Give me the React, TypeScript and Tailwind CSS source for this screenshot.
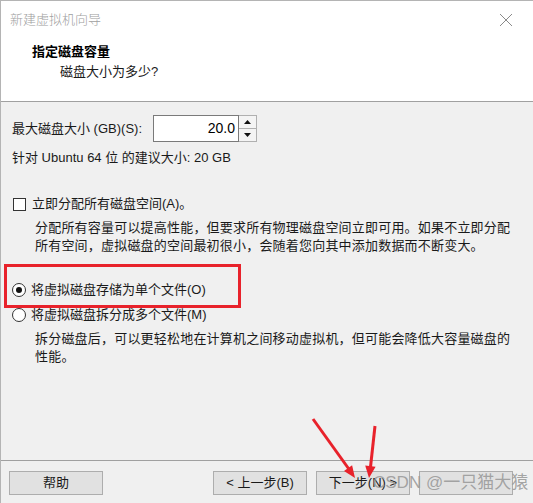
import React from 'react';

const font = { fontFamily: '"Liberation Sans", "Noto Sans CJK SC", sans-serif' };

const Button: React.FC<{ label: string; className?: string }> = ({ label, className }) => (
  <div
    className={`w-[94px] h-[24px] flex items-center justify-center bg-[#e1e1e1] border border-[#adadad] text-[13px] text-[#1a1a1a] ${className ?? ''}`}
  >
    {label}
  </div>
);

const App: React.FC = () => {
  return (
    <div className="relative w-[533px] h-[503px] overflow-hidden bg-[#f0f0f0]" style={font}>
      <div className="h-full flex flex-col border-l border-t border-[#b4b4b4]">
        {/* Title bar */}
        <div className="h-[37px] bg-white flex items-center justify-between pl-[9px] pr-[20px]">
          <span className="text-[13px] text-[#a0a0a0] font-light">新建虚拟机向导</span>
          <svg width="14" height="14" viewBox="0 0 14 14">
            <path d="M1 1 L13 13 M13 1 L1 13" stroke="#8a8a8a" strokeWidth="1" />
          </svg>
        </div>

        {/* Header */}
        <div className="h-[64px] bg-white border-b border-[#a0a0a0] pt-[5px]">
          <div className="pl-[31px] text-[13px] leading-[18px] font-bold text-black">指定磁盘容量</div>
          <div className="pl-[59px] mt-[2px] text-[13px] leading-[18px] text-[#1a1a1a]">磁盘大小为多少?</div>
        </div>

        {/* Body */}
        <div className="flex-1 pl-[11px] pt-[13px] text-[13px] text-[#1a1a1a]">
          <div className="flex items-center h-[27px]">
            <span className="w-[141px]">最大磁盘大小 (GB)(S):</span>
            <div className="w-[86px] h-[27px] bg-white border border-[#7a7a7a] flex items-center justify-end pr-[3px] text-[14px] text-black">
              20.0
            </div>
            <div className="w-[18px] h-[27px] flex flex-col border border-l-0 border-[#b0b0b0]">
              <div className="flex-1 flex items-center justify-center bg-[#f4f4f4] border-b border-[#b0b0b0]">
                <svg width="7" height="4" viewBox="0 0 7 4">
                  <path d="M3.5 0 L7 4 L0 4 Z" fill="#111" />
                </svg>
              </div>
              <div className="flex-1 flex items-center justify-center bg-[#f4f4f4]">
                <svg width="7" height="4" viewBox="0 0 7 4">
                  <path d="M0 0 L7 0 L3.5 4 Z" fill="#111" />
                </svg>
              </div>
            </div>
          </div>
          <div className="mt-[7px] leading-[18px]">针对 Ubuntu 64 位 的建议大小: 20 GB</div>

          <div className="mt-[28px] flex items-center h-[18px]">
            <div className="w-[13px] h-[13px] ml-[1px] bg-white border border-[#333]" />
            <span className="ml-[6px]">立即分配所有磁盘空间(A)。</span>
          </div>
          <div className="mt-[6px] pl-[23px] pr-[20px] leading-[18px] tracking-[0.2px]">
            分配所有容量可以提高性能，但要求所有物理磁盘空间立即可用。如果不立即分配所有空间，虚拟磁盘的空间最初很小，会随着您向其中添加数据而不断变大。
          </div>

          <div className="mt-[26px] flex items-center h-[18px]">
            <div className="w-[14px] h-[14px] rounded-full bg-white border border-[#333] flex items-center justify-center">
              <div className="w-[6px] h-[6px] rounded-full bg-[#111]" />
            </div>
            <span className="ml-[5px]">将虚拟磁盘存储为单个文件(O)</span>
          </div>
          <div className="mt-[7px] flex items-center h-[18px]">
            <div className="w-[14px] h-[14px] rounded-full bg-white border border-[#333]" />
            <span className="ml-[5px]">将虚拟磁盘拆分成多个文件(M)</span>
          </div>
          <div className="mt-[6px] pl-[23px] pr-[20px] leading-[18px] tracking-[0.2px]">
            拆分磁盘后，可以更轻松地在计算机之间移动虚拟机，但可能会降低大容量磁盘的性能。
          </div>
        </div>

        {/* Footer */}
        <div className="h-[43px] border-t border-[#a0a0a0] flex items-start pt-[10px] pl-[8px] pr-[20px]">
          <Button label="帮助" />
          <div className="flex-1" />
          <div className="flex gap-[9px]">
            <Button label="< 上一步(B)" />
            <Button label="下一步(N) >" />
            <Button label="" />
          </div>
        </div>
      </div>

      {/* Annotation: red box */}
      <div className="absolute left-[4px] top-[264px] w-[237px] h-[44px] border-[3px] border-[#e8222b]" />

      {/* Watermark */}
      <div className="absolute left-[373px] top-[472px] text-[17px] leading-[22px] text-[#9a9a9a]/90 whitespace-nowrap">
        CSDN @一只猫大猿
      </div>

      {/* Annotation: arrows */}
      <svg className="absolute left-0 top-0" width="533" height="503" viewBox="0 0 533 503">
        <line x1="313" y1="419" x2="348.5" y2="468.5" stroke="#e8222b" strokeWidth="3" />
        <path d="M355 478 L344 471.1 L352.1 465.3 Z" fill="#e8222b" />
        <line x1="375" y1="426" x2="370.5" y2="467" stroke="#e8222b" strokeWidth="3" />
        <path d="M369 478 L365.2 465.5 L375.6 466.7 Z" fill="#e8222b" />
      </svg>
    </div>
  );
};

export default App;
